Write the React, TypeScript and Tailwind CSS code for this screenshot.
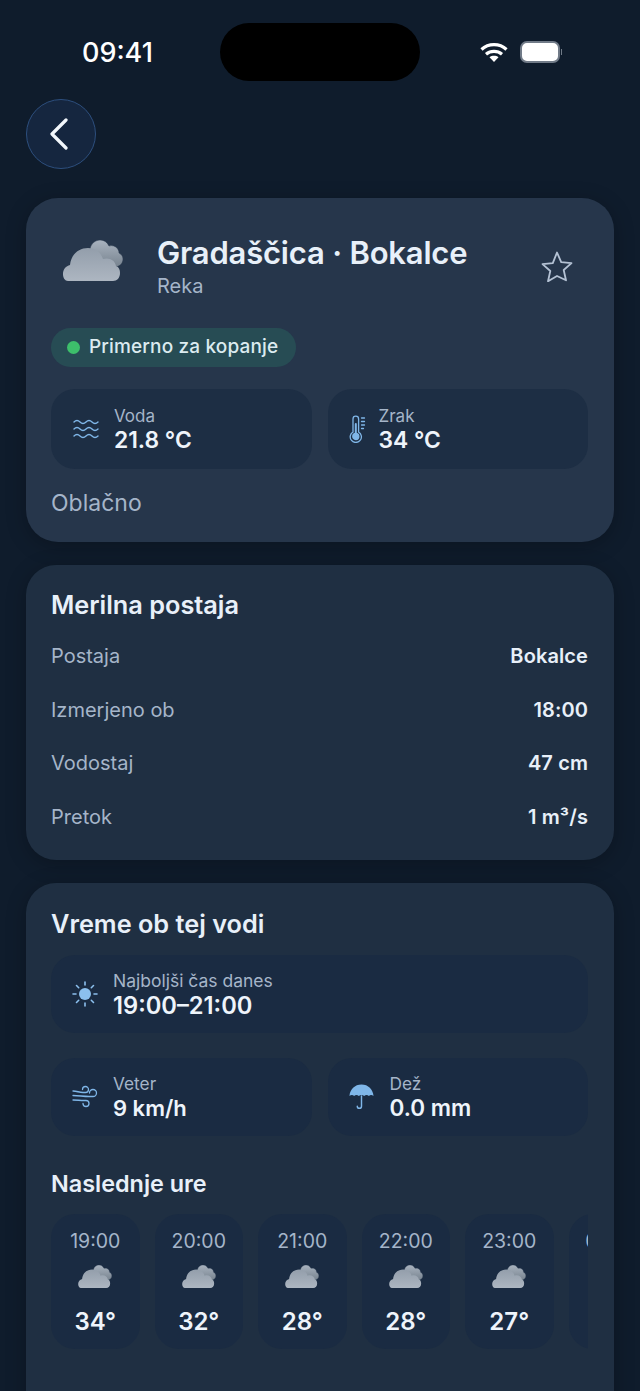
import React from 'react';

const hours = [
  { time: '19:00', temp: '34°' },
  { time: '20:00', temp: '32°' },
  { time: '21:00', temp: '28°' },
  { time: '22:00', temp: '28°' },
  { time: '23:00', temp: '27°' },
  { time: '00:00', temp: '26°' },
];

const rows = [
  { label: 'Postaja', value: 'Bokalce' },
  { label: 'Izmerjeno ob', value: '18:00' },
  { label: 'Vodostaj', value: '47 cm' },
  { label: 'Pretok', value: '1 m³/s' },
];

function CloudIcon({ className }: { className: string }) {
  return (
    <svg viewBox="0 0 60 41" className={className}>
      <defs>
        <linearGradient id="cloudBack" x1="0" y1="0" x2="0" y2="1">
          <stop offset="0" stopColor="#a9b3bf" />
          <stop offset="1" stopColor="#77838f" />
        </linearGradient>
        <linearGradient id="cloudFront" x1="0" y1="0" x2="0" y2="1">
          <stop offset="0" stopColor="#939eab" />
          <stop offset="1" stopColor="#adb6c1" />
        </linearGradient>
      </defs>
      <path
        d="M27 9C28 3 33 0 37 0c4 0 7 2 9 6 3-1 6 0 8 2 1 1 2 3 2 5 2 1 4 3 4 6 0 5-4 8-9 8H30z"
        fill="url(#cloudBack)"
        stroke="#26364b"
        strokeWidth="0.5"
      />
      <path
        d="M5 41c-3 0-5-3-5-7 0-5 3-8 7-9C8 15 15 8 25 8c8 0 13 5 15 11 6-2 12 1 13 7 3 1 4 4 4 7 0 5-3 8-7 8z"
        fill="url(#cloudFront)"
      />
    </svg>
  );
}

function WavesIcon() {
  return (
    <svg viewBox="0 0 26 22" className="w-[26px] h-[22px] text-[#7fb6e8]" fill="none" stroke="currentColor" strokeWidth="1.4" strokeLinecap="round">
      <path d="M1 4c2-2 4-2 6 0s4 2 6 0 4-2 6 0 4 2 6 0" />
      <path d="M1 11c2-2 4-2 6 0s4 2 6 0 4-2 6 0 4 2 6 0" />
      <path d="M1 18c2-2 4-2 6 0s4 2 6 0 4-2 6 0 4 2 6 0" />
    </svg>
  );
}

function ThermometerIcon() {
  return (
    <svg viewBox="0 0 18 28" className="w-[18px] h-[28px] text-[#7fb6e8]" fill="none" stroke="currentColor" strokeWidth="1.3" strokeLinecap="round">
      <path d="M4 4a2.800 2.800 0 0 1 5.600 0v13a5.600 5.600 0 1 1-5.600 0z" />
      <circle cx="6.800" cy="21.500" r="3" fill="currentColor" />
      <path d="M6.800 20V9" strokeWidth="2" />
      <path d="M12.500 3h3M12.500 6.500h3M12.500 10h3M12.500 13.500h2" />
    </svg>
  );
}

function SunIcon() {
  return (
    <svg viewBox="0 0 26 26" className="w-[26px] h-[26px] text-[#8cc0ee]" fill="none" stroke="currentColor" strokeWidth="1.6" strokeLinecap="round">
      <circle cx="13" cy="13" r="6" fill="currentColor" stroke="none" />
      <path d="M13 1v3M13 22v3M1 13h3M22 13h3M4.500 4.500l2.200 2.200M19.300 19.300l2.200 2.200M4.500 21.500l2.200-2.200M19.300 6.700l2.200-2.200" />
    </svg>
  );
}

function WindIcon() {
  return (
    <svg viewBox="0 0 26 24" className="w-[26px] h-[24px] text-[#7fb6e8]" fill="none" stroke="currentColor" strokeWidth="1.3" strokeLinecap="round">
      <path d="M1 6c4 0 6 1.500 10 1.500h2.500a3 3 0 1 0-3-3" />
      <path d="M1 10.500c6 0 10 1 16 1h4a3.500 3.500 0 1 0-3.500-3.500" />
      <path d="M1 15c4 0 7 .5 11 .5h2a3 3 0 1 1-3 3" />
    </svg>
  );
}

function UmbrellaIcon() {
  return (
    <svg viewBox="0 0 26 28" className="w-[25px] h-[28px] text-[#7fb6e8]">
      <path d="M13 1c7 0 12 5 12.500 12-1.500-1.500-3.500-1.500-4.800 0-1.400-1.500-3.500-1.500-4.900 0-1.700-1.500-3.900-1.500-5.600 0-1.400-1.500-3.500-1.500-4.900 0C4 11.500 2 11.500.5 13 1 6 6 1 13 1z" fill="currentColor" />
      <path d="M13 13v10.500a2.200 2.200 0 0 1-4.400 0" fill="none" stroke="currentColor" strokeWidth="1.500" strokeLinecap="round" />
    </svg>
  );
}

function WifiIcon() {
  return (
    <svg viewBox="0 0 28 20" className="w-[28px] h-[20px] text-white" fill="none" stroke="currentColor" strokeWidth="3.200">
      <path d="M1.500 7.500c7-6.500 18-6.500 25 0" />
      <path d="M6 12.300c4.600-3.800 11.400-3.800 16 0" />
      <path d="M14 20l-4.500-4.800c2.500-1.800 6.500-1.800 9 0z" fill="currentColor" stroke="none" />
    </svg>
  );
}

export default function App() {
  return (
    <div className="h-[1391px] overflow-hidden bg-[#0f1c2c] font-['Inter',sans-serif] text-[#eef4fb]">
      {/* Status bar */}
      <div className="flex items-center h-[58px] mt-[23px] pl-[82px] pr-[78px]">
        <span className="w-[138px] text-[27px] font-medium leading-none text-white">09:41</span>
        <div className="w-[200px] h-[58px] rounded-full bg-black" />
        <div className="flex flex-1 items-center justify-end gap-[12px]">
          <WifiIcon />
          <div className="flex items-center gap-[1px]">
            <div className="w-[40px] h-[22px] rounded-[7px] border-2 border-[#717b88] bg-white" />
            <div className="w-[1px] h-[6px] bg-[#717b88]" />
          </div>
        </div>
      </div>

      <div className="px-[26px] pt-[18px]">
        <button className="flex items-center justify-center w-[70px] h-[70px] rounded-full border border-[#2d4f7e] bg-[#15263f] text-[#f2f7fc]">
          <svg viewBox="0 0 20 32" className="w-[20px] h-[32px] mr-[5px]" fill="none" stroke="currentColor" strokeWidth="3.200" strokeLinecap="round" strokeLinejoin="round">
            <path d="M17 2L3 16l14 14" />
          </svg>
        </button>

        {/* Main card */}
        <div className="mt-[29px] h-[344px] rounded-[32px] bg-[#26364b] pl-[25px] pr-[26px] pt-[34px] shadow-[0_4px_20px_rgba(0,0,0,0.25)]">
          <div className="flex items-start">
            <CloudIcon className="w-[60px] h-[41px] ml-[12px] mt-[8px]" />
            <div className="ml-[34px] flex-1">
              <div className="text-[31px] font-semibold leading-[42px] tracking-[-0.2px] text-[#e8f0f9]">Gradaščica · Bokalce</div>
              <div className="text-[20px] leading-[24px] text-[#a5b5c9]">Reka</div>
            </div>
            <svg viewBox="0 0 32 31" className="w-[32px] h-[31px] mt-[19px] mr-[15px] text-[#b4c2d4]" fill="none" stroke="currentColor" strokeWidth="1.800" strokeLinejoin="round">
              <path d="M16 1.500l4.200 9.600 10.300 1-7.800 6.900 2.300 10.300L16 25l-9 5.300 2.300-10.300-7.800-6.900 10.300-1z" />
            </svg>
          </div>
          <div className="mt-[30px] flex items-center w-[245px] h-[39px] rounded-full bg-[#274c54] pl-[16px]">
            <span className="w-[13px] h-[13px] rounded-full bg-[#3dbf6b]" />
            <span className="ml-[9px] text-[19px] font-medium tracking-[0.15px] text-[#dcebf0]">Primerno za kopanje</span>
          </div>
          <div className="mt-[22px] grid grid-cols-2 gap-[16px]">
            <div className="flex items-center h-[80px] rounded-[24px] bg-[#1d2e44] pl-[22px]">
              <WavesIcon />
              <div className="ml-[15px]">
                <div className="text-[17px] leading-[22px] text-[#a5b5c9]">Voda</div>
                <div className="text-[22.800px] font-semibold leading-[26px] text-[#eef4fb]">21.8 °C</div>
              </div>
            </div>
            <div className="flex items-center h-[80px] rounded-[24px] bg-[#1d2e44] pl-[21px]">
              <ThermometerIcon />
              <div className="ml-[12px]">
                <div className="text-[17px] leading-[22px] text-[#a5b5c9]">Zrak</div>
                <div className="text-[22.800px] font-semibold leading-[26px] text-[#eef4fb]">34 °C</div>
              </div>
            </div>
          </div>
          <div className="mt-[19px] text-[23px] leading-[30px] text-[#a5b5c9]">Oblačno</div>
        </div>

        {/* Station */}
        <div className="mt-[23px] h-[295px] rounded-[30px] bg-[#1f2f42] pl-[25px] pr-[26px] pt-[24px] shadow-[0_4px_20px_rgba(0,0,0,0.25)]">
          <div className="text-[25.300px] font-semibold leading-[32px] text-[#e8f0f9]">Merilna postaja</div>
          <div className="mt-[8px]">
            {rows.map((row) => (
              <div key={row.label} className="flex items-center justify-between h-[53.700px]">
                <span className="text-[20px] text-[#a5b5c9]">{row.label}</span>
                <span className="text-[20px] font-semibold tracking-[0.1px] text-[#e8f0f9]">{row.value}</span>
              </div>
            ))}
          </div>
        </div>

        {/* Weather */}
        <div className="mt-[23px] h-[560px] rounded-[30px] bg-[#1f2f42] pl-[25px] pr-[26px] pt-[25px] shadow-[0_4px_20px_rgba(0,0,0,0.25)]">
          <div className="text-[25.300px] font-semibold leading-[32px] text-[#e8f0f9]">Vreme ob tej vodi</div>
          <div className="mt-[15px] flex items-center h-[78px] rounded-[24px] bg-[#1a2b42] pl-[21px]">
            <SunIcon />
            <div className="ml-[15px]">
              <div className="text-[17.500px] leading-[22px] text-[#a5b5c9]">Najboljši čas danes</div>
              <div className="mt-[1px] text-[23.700px] font-semibold leading-[26px] text-[#eef4fb]">19:00–21:00</div>
            </div>
          </div>
          <div className="mt-[25px] grid grid-cols-2 gap-[16px]">
            <div className="flex items-center h-[78px] rounded-[24px] bg-[#1a2b42] pl-[21px]">
              <WindIcon />
              <div className="ml-[15px]">
                <div className="text-[17.300px] leading-[22px] text-[#a5b5c9]">Veter</div>
                <div className="text-[22px] font-semibold leading-[26px] text-[#eef4fb]">9 km/h</div>
              </div>
            </div>
            <div className="flex items-center h-[78px] rounded-[24px] bg-[#1a2b42] pl-[21px]">
              <UmbrellaIcon />
              <div className="ml-[16px]">
                <div className="text-[17.300px] leading-[22px] text-[#a5b5c9]">Dež</div>
                <div className="text-[22.500px] font-semibold leading-[26px] text-[#eef4fb]">0.0 mm</div>
              </div>
            </div>
          </div>
          <div className="mt-[32px] text-[23.400px] font-semibold leading-[32px] text-[#e8f0f9]">Naslednje ure</div>
          <div className="mt-[14px] flex gap-[15px] overflow-hidden">
            {hours.map((hour) => (
              <div key={hour.time} className="flex flex-col items-center shrink-0 w-[88.500px] h-[135px] rounded-[24px] bg-[#1a2b42] pt-[15px]">
                <span className="text-[19.500px] leading-[24px] text-[#a5b5c9]">{hour.time}</span>
                <CloudIcon className="w-[34px] h-[23px] mt-[12px]" />
                <span className="mt-[20px] text-[24px] font-semibold leading-[28px] text-[#eef4fb]">{hour.temp}</span>
              </div>
            ))}
          </div>
        </div>
      </div>
    </div>
  );
}
